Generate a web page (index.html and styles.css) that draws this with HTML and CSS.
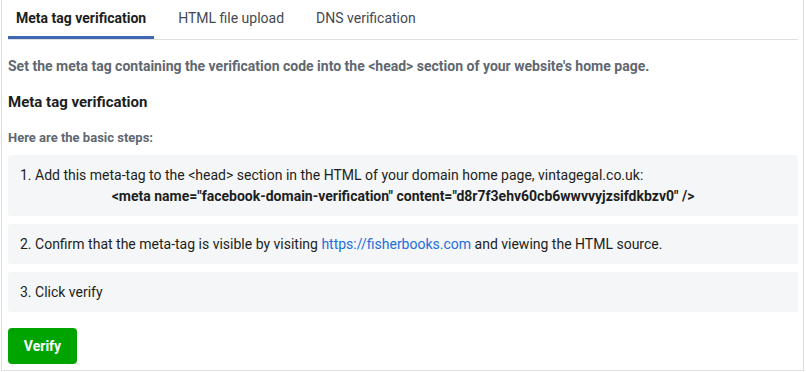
FILE: index.html
```html
<!DOCTYPE html>
<html lang="en">
  <head>
    <meta charset="UTF-8" />
    <title>Domain verification</title>
    <link rel="stylesheet" href="styles.css">
  </head>
  <body>
    <div class="panel">
      <div class="tabs">
        <div class="tab active">Meta tag verification</div>
        <div class="tab">HTML file upload</div>
        <div class="tab">DNS verification</div>
      </div>
      <p class="intro">Set the meta tag containing the verification code into the &lt;head&gt; section of your website's home page.</p>
      <h3 class="heading">Meta tag verification</h3>
      <p class="intro steps-label">Here are the basic steps:</p>
      <div class="step">
        1. Add this meta-tag to the &lt;head&gt; section in the HTML of your domain home page, vintagegal.co.uk:
        <div class="code">&lt;meta name="facebook-domain-verification" content="d8r7f3ehv60cb6wwvvyjzsifdkbzv0" /&gt;</div>
      </div>
      <div class="step">
        2. Confirm that the meta-tag is visible by visiting <a href="#">https://fisherbooks.com</a> and viewing the HTML source.
      </div>
      <div class="step">3. Click verify</div>
      <button class="verify">Verify</button>
    </div>
  </body>
</html>
```

FILE: styles.css
```css
body {
  margin: 0;
  font-family: Roboto, "Liberation Sans", sans-serif;
  background-color: #ffffff;
}
.panel {
  box-sizing: border-box;
  width: 803px;
  margin-left: 1px;
  padding: 0 5px 6px 6px;
  border: 1px solid #dddfe2;
  border-top: none;
}
.tabs {
  display: flex;
  gap: 16px;
  border-bottom: 1px solid #dddfe2;
}
.tab {
  height: 39px;
  box-sizing: border-box;
  padding: 10px 8px 0;
  font-size: 14px;
  line-height: 16px;
  color: #444950;
}
.tab.active {
  font-weight: bold;
  color: #1c1e21;
  border-bottom: 3px solid #4267b2;
}
.intro {
  margin: 18px 0 0;
  font-size: 14px;
  line-height: 16px;
  font-weight: bold;
  color: #606770;
}
.heading {
  margin: 20px 0 0;
  font-size: 15px;
  line-height: 16px;
  font-weight: bold;
  color: #1c1e21;
}
.steps-label {
  margin-top: 20px;
  margin-bottom: 9px;
  font-size: 13px;
}
.step {
  margin-bottom: 8px;
  padding: 12px 12px;
  border-radius: 3px;
  background-color: #f5f6f7;
  font-size: 14px;
  line-height: 16px;
  color: #1c1e21;
}
.code {
  margin-top: 5px;
  text-align: center;
  font-weight: bold;
}
.step a {
  color: #216fdb;
  text-decoration: none;
}
.verify {
  display: block;
  margin-top: 16px;
  width: 69px;
  height: 36px;
  border: none;
  border-radius: 4px;
  background-color: #00a400;
  color: #ffffff;
  font-family: inherit;
  font-size: 14px;
  font-weight: bold;
}
```
